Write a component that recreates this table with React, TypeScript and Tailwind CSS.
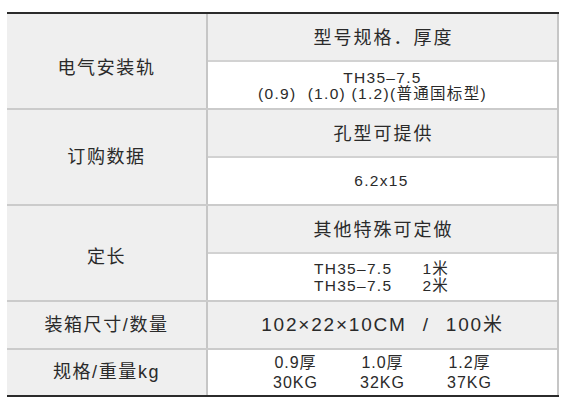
import React from "react";

const font = { fontFamily: '"Liberation Sans", "Noto Sans CJK SC", sans-serif' };

function Group({
  label,
  labelPad = "",
  children,
  last = false,
}: {
  label: React.ReactNode;
  labelPad?: string;
  children: React.ReactNode;
  last?: boolean;
}) {
  return (
    <div className={`flex ${last ? "" : "border-b-2 border-[#cbcbcb]"}`}>
      <div
        className={`w-[201px] shrink-0 bg-[#efefef] border-r-2 border-[#c6c6c6] flex items-center justify-center text-[18px] tracking-[1.6px] text-[#2a2a2a] ${labelPad}`}
      >
        {label}
      </div>
      <div className="flex-1 flex flex-col">{children}</div>
    </div>
  );
}

function HeadCell({ children }: { children: React.ReactNode }) {
  return (
    <div className="h-[48px] bg-[#efefef] border-b-2 border-[#d2d2d2] flex items-center justify-center text-[18px] tracking-[2px] text-[#2a2a2a] pl-[2px] pt-[2px]">
      {children}
    </div>
  );
}

export default function App() {
  return (
    <div className="w-[564px] h-[412px] bg-white pt-[12px] pl-[7px]" style={font}>
      <div className="w-[552px]">
        <div className="h-[2px] bg-[#2b2b2b]" />
        <div className="border-r-2 border-[#c6c6c6]">
          <Group label="电气安装轨" labelPad="pt-[14px]">
            <HeadCell>型号规格．厚度</HeadCell>
            <div className="h-[46px] bg-white flex flex-col items-center justify-center text-[15.5px] leading-[16px] tracking-[1.3px] text-[#2a2a2a] pt-[2px]">
              <div>TH35–7.5</div>
              <div className="whitespace-pre pr-[20px]">(0.9)  (1.0) (1.2)(普通国标型)</div>
            </div>
          </Group>
          <Group label="订购数据">
            <HeadCell>孔型可提供</HeadCell>
            <div className="h-[46px] bg-white flex items-center justify-center text-[15.5px] tracking-[1.3px] text-[#2a2a2a] pr-[2px]">
              6.2x15
            </div>
          </Group>
          <Group label="定长" labelPad="pt-[8px]">
            <HeadCell>其他特殊可定做</HeadCell>
            <div className="h-[46px] bg-white flex flex-col items-center justify-center text-[15.5px] leading-[17px] tracking-[1.3px] text-[#2a2a2a] pr-[2px]">
              <div className="flex gap-[30px]">
                <span>TH35–7.5</span>
                <span>1米</span>
              </div>
              <div className="flex gap-[30px]">
                <span>TH35–7.5</span>
                <span>2米</span>
              </div>
            </div>
          </Group>
          <Group label="装箱尺寸/数量">
            <div className="h-[46px] bg-[#efefef] flex items-center justify-center text-[19px] tracking-[1.8px] text-[#2a2a2a]">
              <span>102×22×10CM</span>
              <span className="mx-[16px]">/</span>
              <span>100米</span>
            </div>
          </Group>
          <Group label="规格/重量kg" last>
            <div className="h-[45px] bg-white flex items-center justify-center text-[#2a2a2a]">
              <div className="grid grid-cols-[87px_87px_87px] text-[16px] leading-[20px] tracking-[1px] text-center">
                <div>0.9厚</div>
                <div>1.0厚</div>
                <div>1.2厚</div>
                <div>30KG</div>
                <div>32KG</div>
                <div>37KG</div>
              </div>
            </div>
          </Group>
        </div>
        <div className="h-[2px] bg-[#2b2b2b]" />
      </div>
    </div>
  );
}
